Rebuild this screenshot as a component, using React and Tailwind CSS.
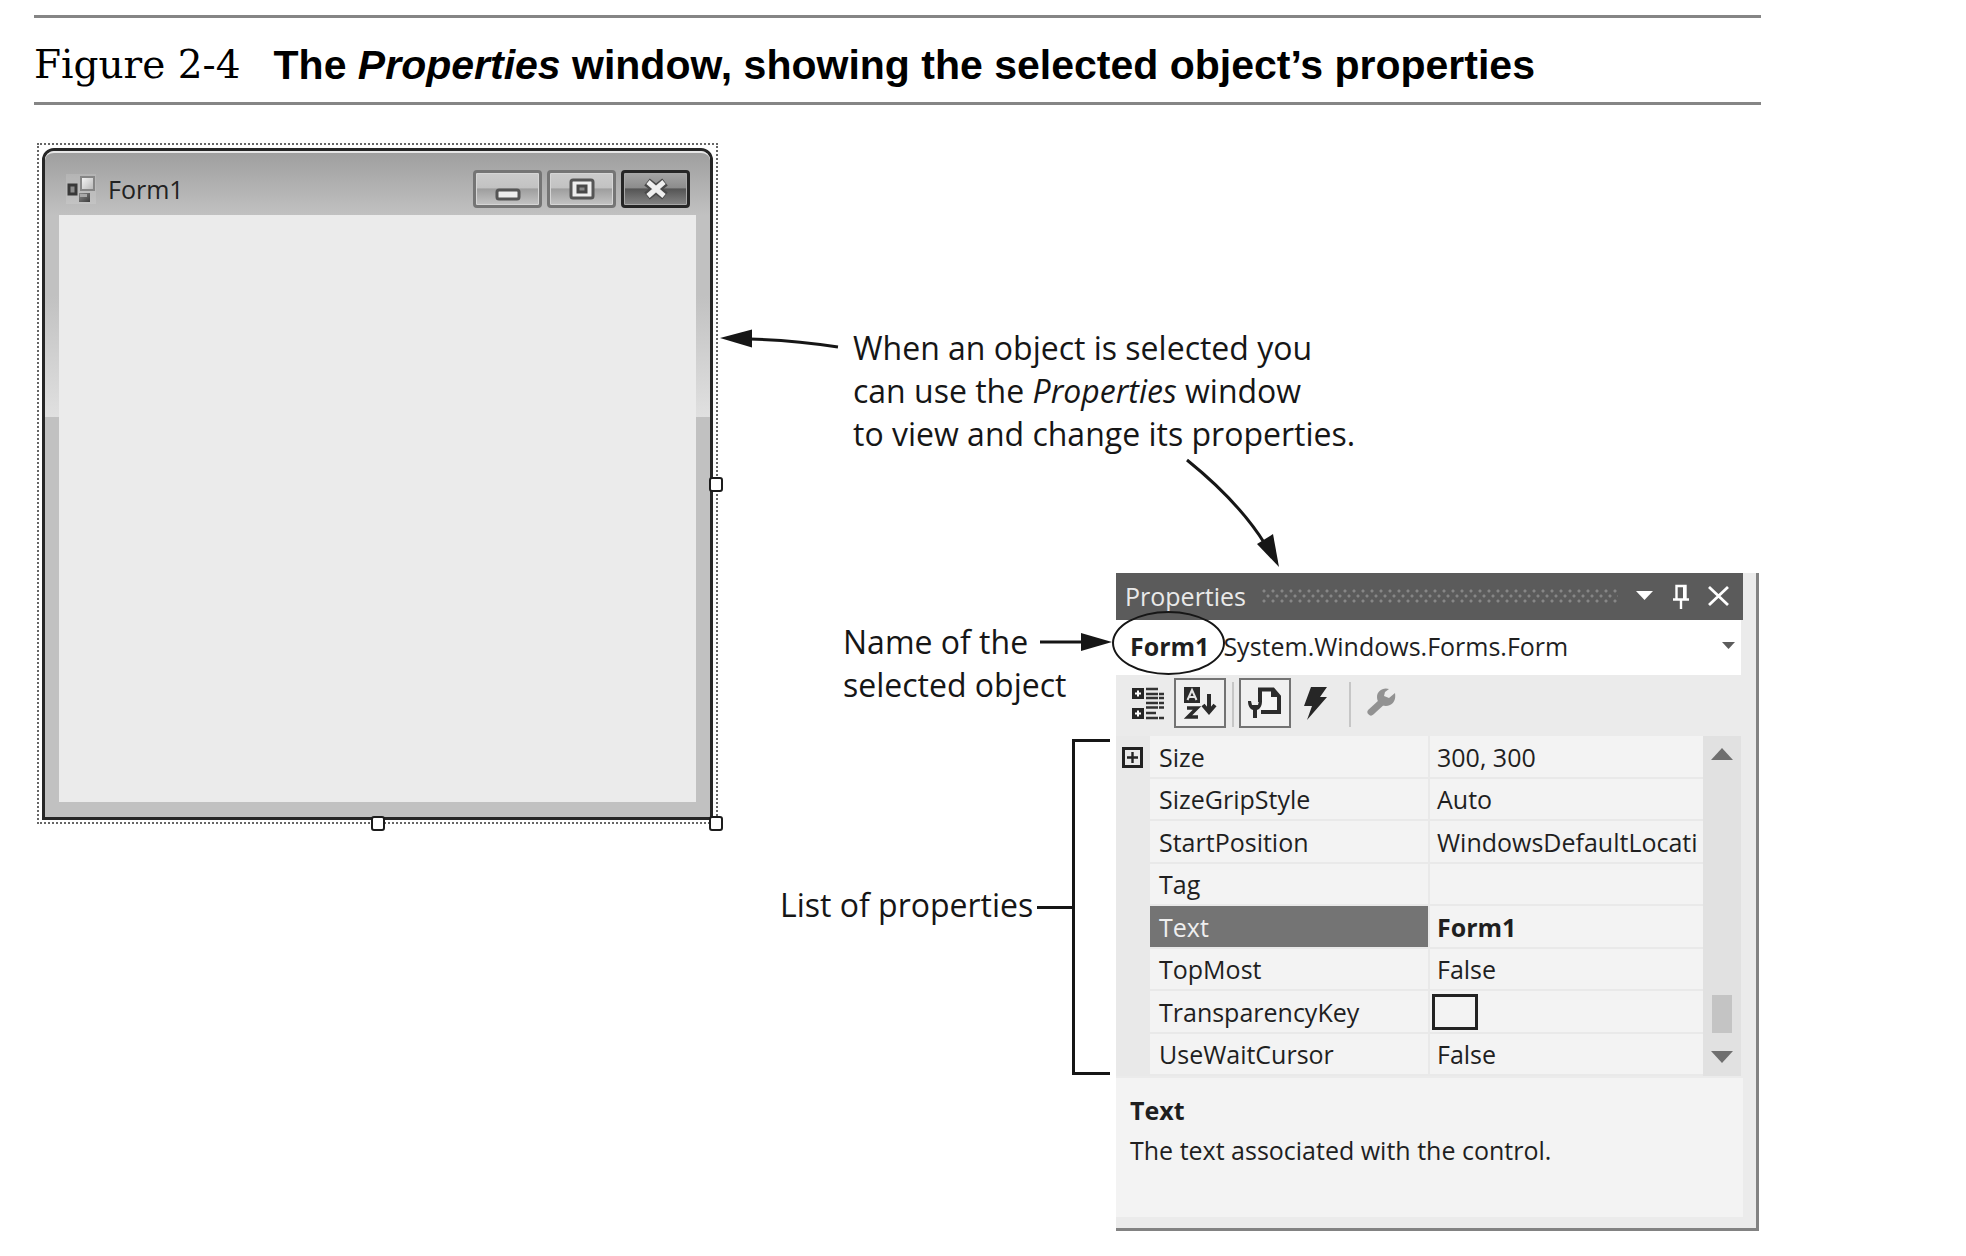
import React from "react";

const INK = "#161616";

const PROPERTIES = [
  { name: "Size", value: "300, 300", expandable: true },
  { name: "SizeGripStyle", value: "Auto" },
  { name: "StartPosition", value: "WindowsDefaultLocati" },
  { name: "Tag", value: "" },
  { name: "Text", value: "Form1", selected: true },
  { name: "TopMost", value: "False" },
  { name: "TransparencyKey", swatch: true },
  { name: "UseWaitCursor", value: "False" },
];

function FormIcon() {
  return (
    <svg width="30" height="30" viewBox="0 0 30 30" aria-hidden="true">
      <defs>
        <linearGradient id="tile" x1="0" y1="0" x2="1" y2="1">
          <stop offset="0" stopColor="#f8f8f8" />
          <stop offset="1" stopColor="#b4b4b4" />
        </linearGradient>
        <linearGradient id="tileDark" x1="0" y1="0" x2="1" y2="1">
          <stop offset="0" stopColor="#8a8a8a" />
          <stop offset="1" stopColor="#3c3c3c" />
        </linearGradient>
      </defs>
      <rect width="30" height="30" fill="#ffffff" opacity="0.12" />
      <rect x="15" y="3" width="13" height="13" fill="url(#tile)" stroke="#868686" strokeWidth="2" />
      <rect x="3" y="11" width="7" height="9" fill="#8c8c8c" stroke="#383838" strokeWidth="3" />
      <rect x="13" y="19" width="11" height="9" fill="url(#tileDark)" />
      <rect x="14" y="20" width="7" height="3" fill="#a8a8a8" />
    </svg>
  );
}

function CaptionButton({ label, dark, children }) {
  return (
    <button
      type="button"
      aria-label={label}
      className={
        dark
          ? "flex h-[38px] w-[69px] items-center justify-center rounded-[4px] border-[3px] border-[#262626] bg-[linear-gradient(#a6a6a6_0%,#8c8c8c_46%,#555555_50%,#858585_100%)] shadow-[inset_0_0_0_1px_#a8a8a8]"
          : "flex h-[38px] w-[69px] items-center justify-center rounded-[4px] border-[3px] border-[#757575] bg-[linear-gradient(#cccccc_0%,#c2c2c2_46%,#9e9e9e_50%,#c4c4c4_100%)] shadow-[inset_0_0_0_1px_#d6d6d6]"
      }
    >
      {children}
    </button>
  );
}

function Handle({ className }) {
  return (
    <span
      className={`absolute h-[15px] w-[14px] rounded-[3px] border-2 border-[#1c1c1c] bg-white ${className}`}
    />
  );
}

function FormDesigner() {
  return (
    <section
      aria-label="Form1 designer"
      className="relative ml-[3px] flex h-[681px] w-[681px] flex-none border-2 border-dotted border-[#666666] p-[3px] pb-[2px]"
    >
      <div className="flex flex-1 flex-col rounded-t-[12px] border-[3px] border-[#262626] bg-[#c1c1c1]">
        <header className="flex h-[64px] items-center rounded-t-[9px] border-t-2 border-[#e6e6e6] bg-[linear-gradient(#9f9f9f,#c1c1c1)] pt-[10px] pr-[20px] pl-[21px]">
          <FormIcon />
          <h2 className="ml-[12px] flex-1 text-[25px] leading-[30px] text-[#222222]">Form1</h2>
          <div className="flex gap-[5px]">
            <CaptionButton label="Minimize">
              <svg width="26" height="28" viewBox="0 0 26 28" aria-hidden="true">
                <rect x="2" y="15" width="22" height="9" rx="2" fill="#ededed" stroke="#555555" strokeWidth="3" />
              </svg>
            </CaptionButton>
            <CaptionButton label="Maximize">
              <svg width="26" height="28" viewBox="0 0 26 28" aria-hidden="true">
                <rect x="2" y="5" width="22" height="18" rx="2" fill="#ededed" stroke="#555555" strokeWidth="3" />
                <rect x="9" y="11" width="8" height="6" fill="#8a8a8a" stroke="#484848" strokeWidth="3" />
              </svg>
            </CaptionButton>
            <CaptionButton label="Close" dark>
              <svg width="28" height="28" viewBox="0 0 28 28" aria-hidden="true">
                <path d="M5 7L23 21M23 7L5 21" stroke="#4a4a4a" strokeWidth="9" />
                <path d="M6 7L22 21M22 7L6 21" stroke="#efefef" strokeWidth="5" />
              </svg>
            </CaptionButton>
          </div>
        </header>
        <div className="flex flex-1 bg-[linear-gradient(#c1c1c1,#c1c1c1_40%,#e0e0e0)] bg-[length:100%_202px] bg-no-repeat px-[14px] pb-[15px]">
          <div className="flex-1 bg-[#ebebeb]" />
        </div>
      </div>
      <Handle className="top-[332px] right-[-7px]" />
      <Handle className="bottom-[-9px] left-[332px]" />
      <Handle className="right-[-7px] bottom-[-9px]" />
    </section>
  );
}

function CategorizedIcon() {
  return (
    <svg width="33" height="33" viewBox="0 0 33 33" aria-hidden="true">
      <rect x="0" y="1" width="12" height="11" fill="#262626" />
      <path d="M6 3.500v6M3 6.500h6" stroke="#fff" strokeWidth="2" />
      <rect x="0" y="21" width="12" height="11" fill="#262626" />
      <path d="M6 23.500v6M3 26.500h6" stroke="#fff" strokeWidth="2" />
      <path
        d="M14 2h12M14 7h12M14 11h12M14 16h12M14 20.500h12M14 26h10M14 31h12M27 7h5M27 11h5M27 16h5M27 20.500h5M27 31h5"
        stroke="#333"
        strokeWidth="2.400"
      />
    </svg>
  );
}

function SortIcon() {
  return (
    <svg width="34" height="34" viewBox="0 0 34 34" aria-hidden="true">
      <rect x="1" y="1" width="16" height="16" fill="#2b2b2b" />
      <path d="M4.500 14 L9 4 L13.500 14 M6 11h6" fill="none" stroke="#e4e4e4" strokeWidth="2" />
      <path d="M4 22h10L5 31h10" fill="none" stroke="#2b2b2b" strokeWidth="3.500" />
      <path d="M26 8v18M20 19l6 7 6-7" fill="none" stroke="#2b2b2b" strokeWidth="4" />
    </svg>
  );
}

function PropertyPageIcon() {
  return (
    <svg width="34" height="34" viewBox="0 0 34 34" aria-hidden="true">
      <path d="M12 16V3.500h13l6 7V26H13" fill="#f4f4f4" stroke="#2b2b2b" strokeWidth="4" />
      <path d="M23 3v8h8z" fill="#2b2b2b" />
      <path d="M6.500 19v13" fill="none" stroke="#f0f0f0" strokeWidth="8" />
      <path d="M0 15c0 5 2 8 5 9v8h4v-8c3-1 5-4 5-9h-3l-1 4H4l-1-4z" fill="#2b2b2b" />
    </svg>
  );
}

function ToolButton({ label, active, children }) {
  return (
    <button
      type="button"
      aria-label={label}
      aria-pressed={active}
      className="flex h-[50px] w-[52px] items-center justify-center border-2 border-transparent aria-pressed:border-[#737373] aria-pressed:bg-[#f0f0f0]"
    >
      {children}
    </button>
  );
}

function TitleBar() {
  return (
    <header className="flex h-[47px] items-center bg-[#5b5b5b] pr-[13px] pb-[2px] pl-[9px] text-[#e9e9e9]">
      <h2 className="text-[25px] leading-[42px]">Properties</h2>
      <span className="mx-[16px] h-[14px] flex-1 bg-[radial-gradient(circle_at_2px_2px,#868686_1px,transparent_2px),radial-gradient(circle_at_6px_7px,#868686_1px,transparent_2px)] bg-[length:9px_10px]" />
      <button type="button" aria-label="Window position">
        <svg width="20" height="26" viewBox="0 0 20 26" aria-hidden="true">
          <path d="M2 8h17l-8.500 9z" fill="#fff" />
        </svg>
      </button>
      <button type="button" aria-label="Auto hide" className="ml-[18px]">
        <svg width="18" height="28" viewBox="0 0 18 28" aria-hidden="true">
          <path d="M4.500 17V4h9v13M1 17.500h16M9 18v9" fill="none" stroke="#fff" strokeWidth="2.400" />
          <path d="M11 4h3v13h-3z" fill="#fff" />
        </svg>
      </button>
      <button type="button" aria-label="Close properties" className="ml-[16px]">
        <svg width="24" height="24" viewBox="0 0 24 24" aria-hidden="true">
          <path d="M3 3l19 18M22 3L3 21" stroke="#fff" strokeWidth="2.800" />
        </svg>
      </button>
    </header>
  );
}

function PropertyGrid() {
  return (
    <div className="mr-[2px] flex bg-[#e9e9e9]">
      <table className="flex-1 table-fixed border-separate border-spacing-0 text-left text-[25px] leading-[34px] text-[#1f1f1f]">
        <colgroup>
          <col className="w-[34px]" />
          <col className="w-[278px]" />
          <col />
        </colgroup>
        <tbody>
          {PROPERTIES.map((p) => (
            <tr key={p.name} className="odd:h-[43px] even:h-[42px]">
              <td className="p-0">
                {p.expandable && (
                  <button
                    type="button"
                    aria-label={`Expand ${p.name}`}
                    className="ml-[6px] flex h-[21px] w-[21px] items-center justify-center border-[3px] border-[#222222]"
                  >
                    <svg width="13" height="13" viewBox="0 0 13 13" aria-hidden="true">
                      <path d="M6.500 1v11M1 6.500h11" stroke="#222" strokeWidth="2.400" />
                    </svg>
                  </button>
                )}
              </td>
              <th
                scope="row"
                className={
                  p.selected
                    ? "border-b-2 border-[#e9e9e9] bg-[#747474] p-0 pl-[9px] font-normal text-[#efefef]"
                    : "border-b-2 border-[#e9e9e9] bg-[#f3f3f3] p-0 pl-[9px] font-normal"
                }
              >
                {p.name}
              </th>
              <td
                className={
                  p.selected
                    ? "border-b-2 border-l-2 border-[#e9e9e9] bg-[#f3f3f3] p-0 pl-[7px] font-bold whitespace-nowrap"
                    : "border-b-2 border-l-2 border-[#e9e9e9] bg-[#f3f3f3] p-0 pl-[7px] whitespace-nowrap"
                }
              >
                {p.swatch ? (
                  <button
                    type="button"
                    aria-label={`${p.name} color`}
                    className="-ml-[5px] block h-[36px] w-[46px] border-[3px] border-[#222222] bg-[#f3f3f3]"
                  />
                ) : (
                  p.value
                )}
              </td>
            </tr>
          ))}
        </tbody>
      </table>
      <div className="flex w-[38px] flex-col items-center bg-[#e1e1e1] pt-[12px] pb-[13px]">
        <button type="button" aria-label="Scroll up">
          <svg width="22" height="12" viewBox="0 0 22 12" aria-hidden="true">
            <path d="M0 12L11 0l11 12z" fill="#6f6f6f" />
          </svg>
        </button>
        <span className="mt-auto mb-[18px] h-[38px] w-[20px] bg-[#c4c4c4]" />
        <button type="button" aria-label="Scroll down">
          <svg width="22" height="12" viewBox="0 0 22 12" aria-hidden="true">
            <path d="M0 0h22L11 12z" fill="#6f6f6f" />
          </svg>
        </button>
      </div>
    </div>
  );
}

function PropertiesWindow() {
  return (
    <section
      aria-label="Properties"
      className="relative mr-[2px] w-[643px] flex-none border-r-[3px] border-b-[3px] border-[#828282] bg-[#ebebeb] pr-[13px] pb-[11px]"
    >
      <TitleBar />
      <button
        type="button"
        className="flex h-[55px] w-[625px] items-center bg-white pr-[6px] pb-[3px] pl-[14px] text-left text-[25px] text-[#1f1f1f]"
      >
        <strong>Form1</strong>
        <span className="ml-[14px] flex-1">System.Windows.Forms.Form</span>
        <svg width="13" height="8" viewBox="0 0 13 8" aria-hidden="true">
          <path d="M0 0h13L6.500 7z" fill="#5c5c5c" />
        </svg>
      </button>
      <div role="toolbar" aria-label="Property tools" className="flex h-[61px] items-start pt-[3px] pl-[6px]">
        <ToolButton label="Categorized">
          <CategorizedIcon />
        </ToolButton>
        <ToolButton label="Alphabetical" active>
          <SortIcon />
        </ToolButton>
        <span className="mr-[5px] ml-[6px] mt-[4px] h-[45px] w-[2px] bg-[#c6c6c6]" />
        <ToolButton label="Property pages" active>
          <PropertyPageIcon />
        </ToolButton>
        <ToolButton label="Events">
          <svg width="28" height="34" viewBox="0 0 28 34" aria-hidden="true">
            <path d="M8 1h16l-7 10h7L4 34l5-14H1z" fill="#262626" />
          </svg>
        </ToolButton>
        <span className="mr-[5px] ml-[6px] mt-[4px] h-[45px] w-[2px] bg-[#c6c6c6]" />
        <ToolButton label="Property wizard">
          <svg width="32" height="32" viewBox="0 0 32 32" aria-hidden="true">
            <path d="M5 25l12-11" stroke="#929292" strokeWidth="7" strokeLinecap="round" />
            <path
              d="M23 2c-6-2-12 2-12 8 0 7 7 11 13 8 4-2 6-6 5-12l-6 5-5-2 1-4z"
              fill="#929292"
            />
          </svg>
        </ToolButton>
      </div>
      <PropertyGrid />
      <div className="mt-[2px] h-[139px] bg-[#f3f3f3] pt-[12px] pl-[14px] text-[25px] leading-[40px] text-[#1f1f1f]">
        <h3 className="font-bold">Text</h3>
        <p>The text associated with the control.</p>
      </div>
      <span className="absolute top-[38px] -left-[4px] h-[64px] w-[113px] rounded-[50%] border-2 border-[#161616]" />
    </section>
  );
}

export default function App() {
  return (
    <main className="min-h-screen bg-white pt-[15px] pr-[205px] pl-[34px] font-['Open_Sans',sans-serif] text-[#161616]">
      <figure>
        <figcaption className="flex h-[90px] items-center gap-[33px] border-y-[3px] border-[#858585] pt-[10px] whitespace-nowrap text-black">
          <span className="font-['DejaVu_Serif',serif] text-[39px] leading-[48px]">Figure 2-4</span>
          <span className="font-['Liberation_Sans',sans-serif] text-[41px] leading-[48px] font-bold">
            The <em>Properties</em> window, showing the selected object’s properties
          </span>
        </figcaption>
        <div className="mt-[38px] flex items-start">
          <FormDesigner />
          <div className="flex flex-1 flex-col text-[32px] leading-[43px]">
            <div className="mt-[183px] flex">
              <svg width="122" height="26" viewBox="0 0 122 26" className="mr-[13px] flex-none" aria-hidden="true">
                <path d="M2 12L34 3.500V21.500z" fill={INK} />
                <path d="M32 13Q76 14 120 21" fill="none" stroke={INK} strokeWidth="3" />
              </svg>
              <p>
                When an object is selected you
                <br />
                can use the <em>Properties</em> window
                <br />
                to view and change its properties.
              </p>
            </div>
            <svg width="100" height="118" viewBox="0 0 100 118" className="mr-[477px] self-end" aria-hidden="true">
              <path d="M3 5Q55 47 81 89" fill="none" stroke={INK} strokeWidth="3" />
              <path d="M95 112L73 89L89 79z" fill={INK} />
            </svg>
            <div className="flex justify-end">
              <div className="w-[336px] flex-none pt-[47px]">
                <p className="pl-[63px]">
                  <span className="flex items-center justify-between pr-[4px]">
                    Name of the
                    <svg width="72" height="20" viewBox="0 0 72 20" aria-hidden="true">
                      <path d="M0 10H42" stroke={INK} strokeWidth="3" />
                      <path d="M72 10L41 1V19z" fill={INK} />
                    </svg>
                  </span>
                  selected object
                </p>
                <div className="mt-[33px] flex items-center">
                  <span className="flex-1 pb-[6px]">List of properties</span>
                  <span className="h-[3px] w-[35px] bg-[#161616]" />
                  <span className="mr-[6px] h-[336px] w-[38px] border-y-[3px] border-l-[3px] border-[#161616]" />
                </div>
              </div>
              <PropertiesWindow />
            </div>
          </div>
        </div>
      </figure>
    </main>
  );
}
